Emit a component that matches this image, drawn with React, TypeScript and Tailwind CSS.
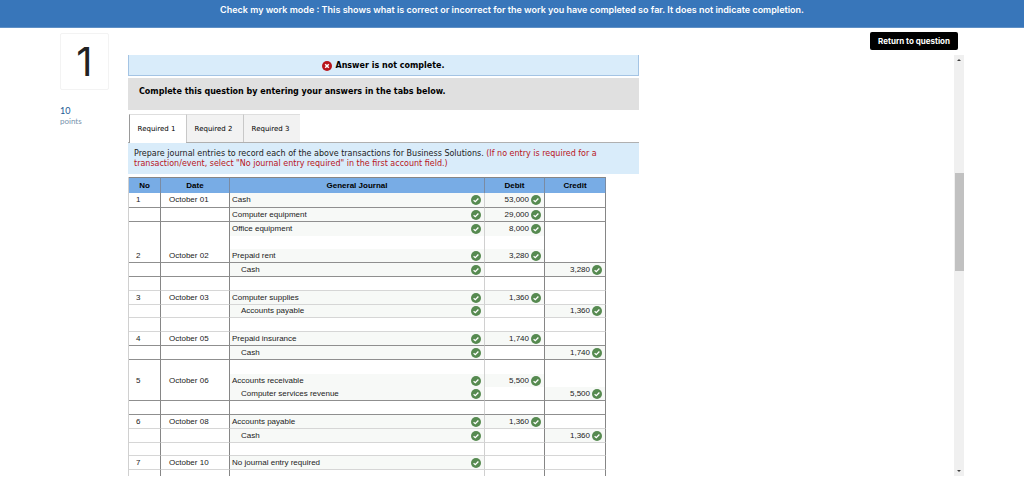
import { useState } from "react";
import clsx from "clsx";

type Rule = "dark" | "light" | "none";

type Row = {
  no?: string;
  date?: string;
  account?: string;
  indent?: boolean;
  debit?: string;
  credit?: string;
  rule: Rule;
};

const rows: Row[] = [
  { no: "1", date: "October 01", account: "Cash", debit: "53,000", rule: "dark" },
  { account: "Computer equipment", debit: "29,000", rule: "dark" },
  { account: "Office equipment", debit: "8,000", rule: "none" },
  { rule: "none" },
  { no: "2", date: "October 02", account: "Prepaid rent", debit: "3,280", rule: "dark" },
  { account: "Cash", indent: true, credit: "3,280", rule: "dark" },
  { rule: "light" },
  { no: "3", date: "October 03", account: "Computer supplies", debit: "1,360", rule: "light" },
  { account: "Accounts payable", indent: true, credit: "1,360", rule: "light" },
  { rule: "light" },
  { no: "4", date: "October 05", account: "Prepaid insurance", debit: "1,740", rule: "dark" },
  { account: "Cash", indent: true, credit: "1,740", rule: "dark" },
  { rule: "none" },
  { no: "5", date: "October 06", account: "Accounts receivable", debit: "5,500", rule: "none" },
  { account: "Computer services revenue", indent: true, credit: "5,500", rule: "dark" },
  { rule: "dark" },
  { no: "6", date: "October 08", account: "Accounts payable", debit: "1,360", rule: "light" },
  { account: "Cash", indent: true, credit: "1,360", rule: "light" },
  { rule: "light" },
  { no: "7", date: "October 10", account: "No journal entry required", rule: "light" },
  { rule: "light" },
];

const tabs = ["Required 1", "Required 2", "Required 3"];

function Check() {
  return (
    <svg viewBox="0 0 20 20" className="size-[10px] shrink-0" role="img" aria-label="Correct">
      <circle cx="10" cy="10" r="10" fill="#568a50" />
      <path d="M5.2 10.6 8.6 13.4 14.8 7" fill="none" stroke="#fff" strokeWidth="2.6" />
    </svg>
  );
}

function Wrong() {
  return (
    <svg viewBox="0 0 20 20" className="size-[10px] shrink-0" aria-hidden="true">
      <circle cx="10" cy="10" r="10" fill="#b8141b" />
      <path d="M6.4 6.4 13.6 13.6M13.6 6.4 6.4 13.6" stroke="#fff" strokeWidth="3" />
    </svg>
  );
}

function Amount({ value, className }: { value?: string; className: string }) {
  return (
    <td className={clsx("border-r p-0", className, value && "bg-[#f7f9f7]")}>
      {value && (
        <div className="flex items-center justify-end gap-[2px] pr-[3px]">
          <span>{value}</span>
          <Check />
        </div>
      )}
    </td>
  );
}

function JournalRow({ row }: { row: Row }) {
  const rule = clsx(
    row.rule !== "none" && "border-b",
    row.rule === "dark" && "border-b-[#8f8f8f]",
    row.rule === "light" && "border-b-[#d6d6d6]",
  );
  return (
    <tr className="h-[14px]">
      <td className={clsx("border-r border-r-[#868686] py-0 pr-0 pl-[7px]", rule)}>{row.no}</td>
      <td className={clsx("border-r border-r-[#868686] py-0 pr-0 pl-[8px]", rule)}>{row.date}</td>
      <td className={clsx("border-r border-r-[#d0d0d0] p-0", rule, row.account && "bg-[#f7f9f7]")}>
        {row.account && (
          <div className={clsx("flex items-center justify-between pr-[3px]", row.indent ? "pl-[11px]" : "pl-[2px]")}>
            <span>{row.account}</span>
            <Check />
          </div>
        )}
      </td>
      <Amount value={row.debit} className={clsx("border-r-[#868686]", rule)} />
      <Amount value={row.credit} className={clsx("border-r-[#868686]", rule)} />
    </tr>
  );
}

function Scrollbar() {
  return (
    <div className="flex w-[10px] shrink-0 flex-col items-center bg-[#f0f0f0]" aria-hidden="true">
      <svg viewBox="0 0 4 2" className="mt-[4px] h-[2px] w-[4px]">
        <path d="M0 2 2 0 4 2z" fill="#404040" />
      </svg>
      <div className="min-h-0 grow-[112]" />
      <div className="min-h-0 w-full grow-[98] border-l border-[#f0f0f0] bg-[#c1c1c1]" />
      <div className="min-h-0 grow-[200]" />
      <svg viewBox="0 0 4 2" className="mb-[4px] h-[2px] w-[4px]">
        <path d="M0 0 2 2 4 0z" fill="#404040" />
      </svg>
    </div>
  );
}

export default function App() {
  const [active, setActive] = useState(0);
  return (
    <div className="flex h-screen flex-col overflow-hidden bg-white pb-[8px] text-black">
      <header className="h-[28px] shrink-0 border-b border-[#5f90c6] bg-[#3876ba] px-4 pt-[4px] text-center font-['Inter',sans-serif] text-[9px] leading-[12px] font-semibold text-white">
        Check my work mode : This shows what is correct or incorrect for the work you have completed so far. It does
        not indicate completion.
      </header>

      <div className="flex min-h-0 flex-1">
        <aside className="w-[128px] shrink-0 pt-[5px] pl-[60px]">
          <div className="flex h-[57px] w-[49px] items-center justify-center rounded-[2px] border border-[#f3f3f3] font-['Inter',sans-serif] text-[40px] leading-none text-[#222]">
            1
          </div>
          <p className="mt-[16px] font-['Lato',sans-serif] text-[9px] leading-[10px] text-[#1b5a94]">10</p>
          <p className="font-['Lato',sans-serif] text-[8px] leading-[10px] text-[#7894ad]">points</p>
        </aside>

        <div className="flex min-h-0 flex-1 flex-col pr-[60px]">
          <div className="flex h-[27px] shrink-0 justify-end pt-[4px] pr-[6px]">
            <button
              type="button"
              className="h-[18px] rounded-[2px] bg-black px-[8px] font-['Inter',sans-serif] text-[8px] leading-[18px] font-bold text-white"
            >
              Return to question
            </button>
          </div>

          <main className="flex min-h-0 flex-1 justify-between">
            <div className="min-h-0 w-full max-w-[511px] overflow-hidden font-['DejaVu_Sans',Verdana,sans-serif] text-[8px] leading-[10px]">
              <div className="flex h-[21px] items-center justify-center gap-[3px] border border-t-0 border-[#a4c4e4] bg-[#d9ecfa] pt-px font-bold">
                <Wrong />
                <span>Answer is not complete.</span>
              </div>
              <div className="mt-[2px] h-[32px] bg-[#e0e0e0] px-[11px] pt-[9px] font-bold">
                Complete this question by entering your answers in the tabs below.
              </div>

              <div className="mt-[4px] flex h-[29px] border-b border-[#b0b0b0] pl-px" role="tablist">
                {tabs.map((tab, i) => (
                  <button
                    key={tab}
                    type="button"
                    role="tab"
                    aria-selected={i === active}
                    onClick={() => setActive(i)}
                    className={clsx(
                      "w-[57px] border-t border-l pr-[3px] text-[7px]",
                      i === active
                        ? "-mb-px border-t-[#dedede] border-l-[#999] bg-white"
                        : "border-t-[#dedede] border-l-[#c8c8c8] bg-[#f2f2f2]",
                    )}
                  >
                    {tab}
                  </button>
                ))}
              </div>

              <p className="h-[31px] bg-[#d9ecfa] px-[6px] pt-[6px] text-[#222]">
                Prepare journal entries to record each of the above transactions for Business Solutions.{" "}
                <span className="text-[#b8141b]">
                  (If no entry is required for a transaction/event, select "No journal entry required" in the first
                  account field.)
                </span>
              </p>

              <table className="mt-[3px] w-[478px] table-fixed border-separate border-spacing-0 border-l border-[#d0d0d0] font-['Liberation_Sans',Arial,sans-serif] text-[8px] leading-[10px] text-[#222]">
                <colgroup>
                  <col className="w-[32px]" />
                  <col className="w-[69px]" />
                  <col className="w-[255px]" />
                  <col className="w-[60px]" />
                  <col className="w-[61px]" />
                </colgroup>
                <thead>
                  <tr className="h-[16px] text-black">
                    {["No", "Date", "General Journal", "Debit", "Credit"].map((label) => (
                      <th
                        key={label}
                        scope="col"
                        className="border-t border-r border-t-[#868686] border-r-[#7a8ba3] bg-[#78ace5] p-0 font-bold"
                      >
                        {label}
                      </th>
                    ))}
                  </tr>
                </thead>
                <tbody className="[&>tr:first-child]:h-[15px] [&>tr:nth-child(5n+4)]:h-[13px]">
                  {rows.map((row, i) => (
                    <JournalRow key={i} row={row} />
                  ))}
                </tbody>
              </table>
            </div>
            <Scrollbar />
          </main>
        </div>
      </div>
    </div>
  );
}
